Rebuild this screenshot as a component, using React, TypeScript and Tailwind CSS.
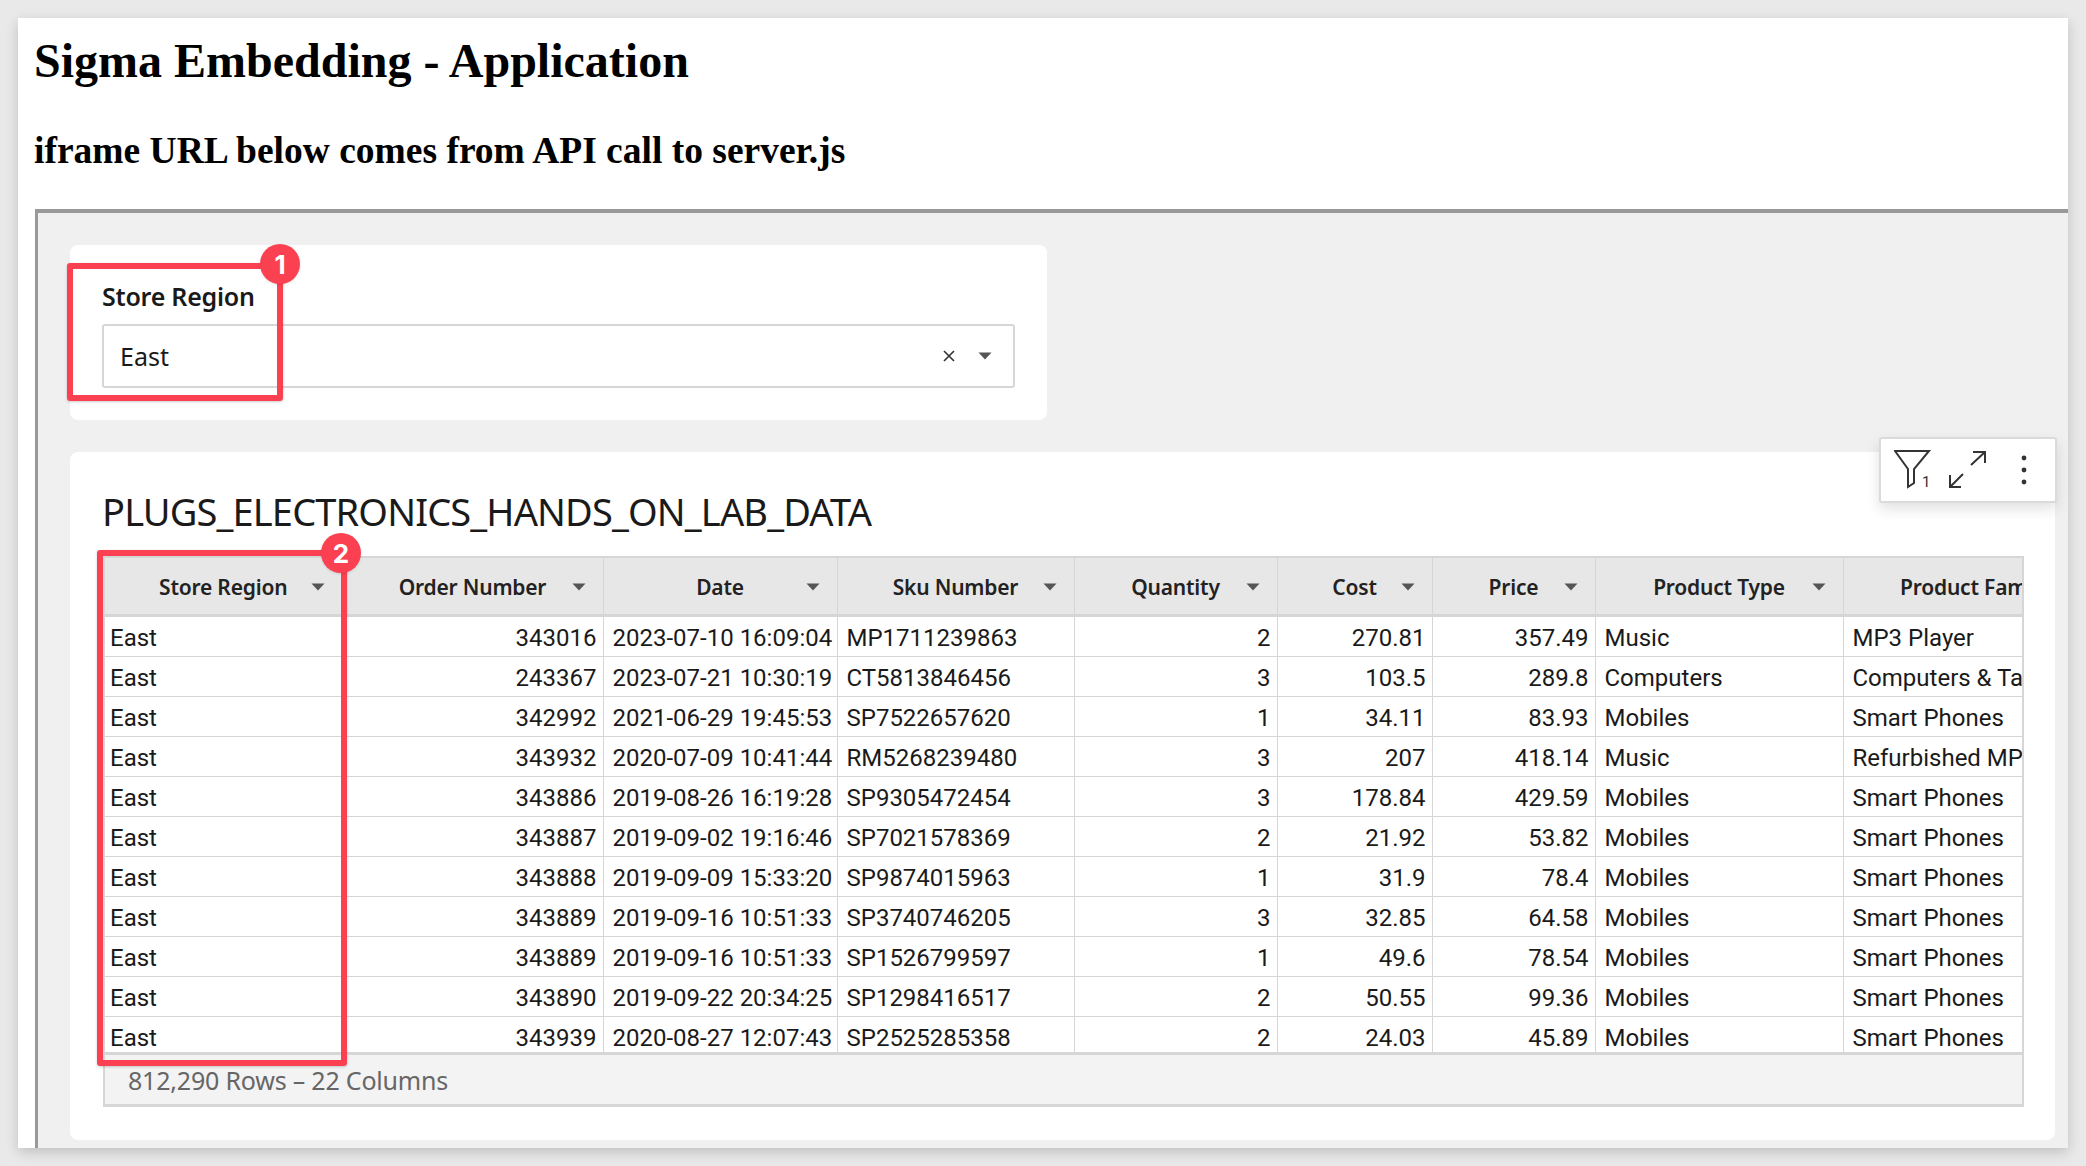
const COLUMNS = [
  { label: 'Store Region', width: 237 },
  { label: 'Order Number', width: 261 },
  { label: 'Date', width: 234 },
  { label: 'Sku Number', width: 237 },
  { label: 'Quantity', width: 203 },
  { label: 'Cost', width: 155 },
  { label: 'Price', width: 163 },
  { label: 'Product Type', width: 248 },
  { label: 'Product Family', width: 264 }
];

const ROWS = [
  ['343016', '2023-07-10 16:09:04', 'MP1711239863', '2', '270.81', '357.49', 'Music', 'MP3 Player'],
  ['243367', '2023-07-21 10:30:19', 'CT5813846456', '3', '103.5', '289.8', 'Computers', 'Computers & Tablets'],
  ['342992', '2021-06-29 19:45:53', 'SP7522657620', '1', '34.11', '83.93', 'Mobiles', 'Smart Phones'],
  ['343932', '2020-07-09 10:41:44', 'RM5268239480', '3', '207', '418.14', 'Music', 'Refurbished MP3 Players'],
  ['343886', '2019-08-26 16:19:28', 'SP9305472454', '3', '178.84', '429.59', 'Mobiles', 'Smart Phones'],
  ['343887', '2019-09-02 19:16:46', 'SP7021578369', '2', '21.92', '53.82', 'Mobiles', 'Smart Phones'],
  ['343888', '2019-09-09 15:33:20', 'SP9874015963', '1', '31.9', '78.4', 'Mobiles', 'Smart Phones'],
  ['343889', '2019-09-16 10:51:33', 'SP3740746205', '3', '32.85', '64.58', 'Mobiles', 'Smart Phones'],
  ['343889', '2019-09-16 10:51:33', 'SP1526799597', '1', '49.6', '78.54', 'Mobiles', 'Smart Phones'],
  ['343890', '2019-09-22 20:34:25', 'SP1298416517', '2', '50.55', '99.36', 'Mobiles', 'Smart Phones'],
  ['343939', '2020-08-27 12:07:43', 'SP2525285358', '2', '24.03', '45.89', 'Mobiles', 'Smart Phones']
];

const NUMERIC = [true, false, false, true, true, true, false, false];

function Caret({ className }: { className: string }) {
  return (
    <svg className={className} width="14" height="8" viewBox="0 0 14 8">
      <path d="M0.5 0.5H13.5L7 7.5Z" fill="#555555" />
    </svg>
  );
}

function Badge({ n, className }: { n: number; className: string }) {
  return (
    <div
      className={`absolute flex h-10 w-10 items-center justify-center rounded-full bg-[#fb4151] font-['Inter',sans-serif] text-[26px] font-bold text-white shadow-sm ${className}`}
    >
      {n}
    </div>
  );
}

function Toolbar() {
  return (
    <div className="absolute left-[1809px] top-[-15px] flex h-[66px] w-[178px] items-center rounded-[3px] border-2 border-[#dadada] bg-white pl-[13px] shadow-[0_6px_14px_rgba(0,0,0,0.12)]">
      <div className="relative h-[40px] w-[40px]">
        <svg width="38" height="40" viewBox="0 0 38 40" fill="none">
          <path d="M1 1H35L20 19V33L14 37V19Z" stroke="#333333" strokeWidth="2" />
        </svg>
        <span className="absolute left-[28px] top-[23px] font-['Roboto',sans-serif] text-[15px] leading-[18px] text-[#333333]">
          1
        </span>
      </div>
      <svg className="ml-[15px]" width="38" height="38" viewBox="0 0 38 38" fill="none">
        <path
          d="M36 1L22 14M24 1H36V12M1 36L14 23M1 24V36H12"
          stroke="#333333"
          strokeWidth="2"
        />
      </svg>
      <svg className="ml-[34px]" width="6" height="30" viewBox="0 0 6 30">
        <circle cx="3" cy="3" r="2.4" fill="#333333" />
        <circle cx="3" cy="15" r="2.4" fill="#333333" />
        <circle cx="3" cy="27" r="2.4" fill="#333333" />
      </svg>
    </div>
  );
}

function DataTable() {
  return (
    <div className="mt-[21px] mr-[31px] overflow-hidden">
      <div className="h-[496px] overflow-hidden border-x-2 border-t-[2px] border-[#d6d6d6]">
        <table className="w-[2002px] table-fixed border-collapse font-['Roboto',sans-serif] text-[24px] leading-[36px] text-[#1a1a1a]">
          <colgroup>
            {COLUMNS.map((c) => (
              <col key={c.label} style={{ width: c.width }} />
            ))}
          </colgroup>
          <thead>
            <tr className="h-[57px] border-b-[3px] border-[#d6d6d6] bg-[#e7e7e7]">
              {COLUMNS.map((c) => (
                <th
                  key={c.label}
                  className="relative border-r border-[#d6d6d6] px-0 pb-0 pt-[2px] text-center font-['Noto_Sans',sans-serif] text-[21px] font-semibold tracking-[-0.2px] text-[#222222]"
                >
                  {c.label}
                  <Caret className="absolute right-[17px] top-[25px]" />
                </th>
              ))}
            </tr>
          </thead>
          <tbody>
            {ROWS.map((row, i) => (
              <tr key={i} className="h-[40px] border-b border-[#d6d6d6]">
                <td className="border-r border-[#d6d6d6] pl-[5px] pr-[6px] pt-[3px] pb-0">East</td>
                {row.map((cell, j) => (
                  <td
                    key={j}
                    className={
                      NUMERIC[j] || j === 0
                        ? 'whitespace-nowrap border-r border-[#d6d6d6] px-[6px] pt-[3px] pb-0 text-right'
                        : 'whitespace-nowrap border-r border-[#d6d6d6] pl-[9px] pr-[6px] pt-[3px] pb-0 text-left'
                    }
                  >
                    {cell}
                  </td>
                ))}
              </tr>
            ))}
          </tbody>
        </table>
      </div>
      <div className="flex h-[55px] items-center border-x-2 border-y-[3px] border-[#d6d6d6] bg-[#f3f3f3] pl-[23px] pt-[2px] font-['Noto_Sans',sans-serif] text-[25px] tracking-[-0.2px] text-[#666666]">
        812,290 Rows – 22 Columns
      </div>
    </div>
  );
}

export default function App() {
  return (
    <div className="h-[1166px] overflow-hidden bg-[#e9e9e9] pl-[18px] pr-[18px] pt-[18px]">
      <div className="h-[1130px] overflow-hidden bg-white shadow-[0_4px_12px_rgba(0,0,0,0.18)]">
        <h1 className="pl-[16px] pt-[16px] font-['Liberation_Serif',serif] text-[48px] font-bold leading-[54px] text-black">
          Sigma Embedding - Application
        </h1>
        <h2 className="pl-[16px] pt-[42px] font-['Liberation_Serif',serif] text-[37.5px] font-bold leading-[42px] text-black">
          iframe URL below comes from API call to server.js
        </h2>
        <div className="ml-[17px] mt-[37px] h-[939px] border-l-[3px] border-t-[4px] border-[#999999] bg-[#f0f0f0] pl-[32px] pr-[13px] pt-[32px]">
          <div className="relative h-[175px] w-[977px] rounded-[8px] bg-white pl-[32px] pr-[32px] pt-[33px] font-['Noto_Sans',sans-serif]">
            <div className="text-[25px] font-semibold leading-[36px] tracking-[-0.25px] text-[#1a1a1a]">
              Store Region
            </div>
            <div className="mt-[10px] flex h-[64px] items-center rounded-[3px] border-2 border-[#d6d6d6] pl-[16px] text-[25px] text-[#1a1a1a]">
              <span className="flex-1 pt-[1px]">East</span>
              <svg width="14" height="14" viewBox="0 0 14 14" fill="none">
                <path d="M2 2L12 12M12 2L2 12" stroke="#333333" strokeWidth="1.6" />
              </svg>
              <Caret className="ml-[22px] mr-[21px]" />
            </div>
            <div className="absolute left-[-3px] top-[18px] h-[138px] w-[216px] rounded-[3px] border-[6px] border-[#fb4151] shadow-[0_1px_3px_rgba(0,0,0,0.2)]" />
            <Badge n={1} className="left-[190px] top-[-1px]" />
          </div>
          <div className="relative mt-[32px] h-[688px] rounded-[8px] bg-white pl-[33px] pt-[36px]">
            <div className="ml-[-1px] font-['Noto_Sans',sans-serif] text-[38px] leading-[47px] tracking-[-0.86px] text-[#1a1a1a]">
              PLUGS_ELECTRONICS_HANDS_ON_LAB_DATA
            </div>
            <DataTable />
            <Toolbar />
            <div className="absolute left-[27px] top-[98px] h-[516px] w-[250px] rounded-[3px] border-[6px] border-[#fb4151] shadow-[0_1px_3px_rgba(0,0,0,0.2)]" />
            <Badge n={2} className="left-[251px] top-[81px]" />
          </div>
        </div>
      </div>
    </div>
  );
}
